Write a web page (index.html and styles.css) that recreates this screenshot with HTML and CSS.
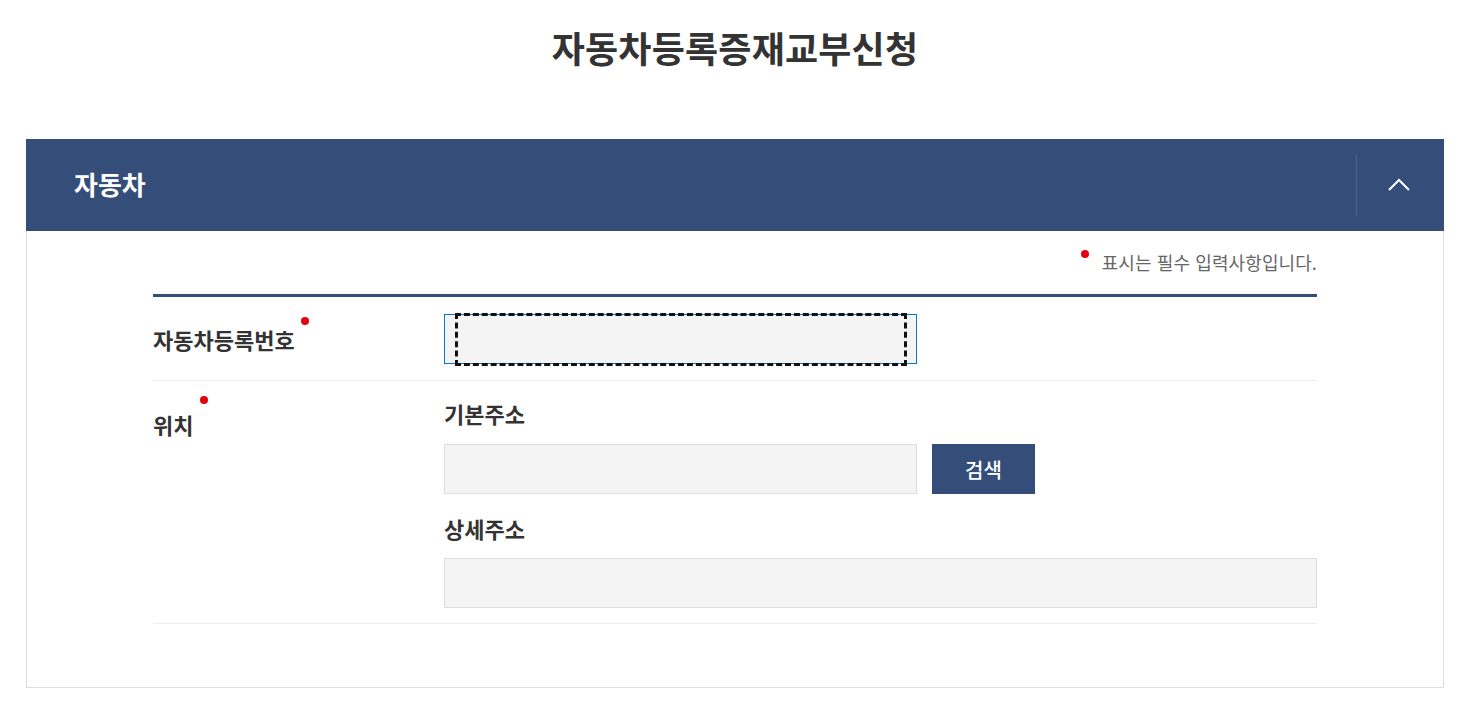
FILE: index.html
```html
<!DOCTYPE html>
<html lang="ko">

<head>
    <meta charset="UTF-8">
    <meta name="viewport" content="width=device-width, initial-scale=1.0">
    <title>자동차등록증재교부신청</title>
    <link rel="stylesheet" href="styles.css">
</head>

<body>
    <h1 class="page-title">자동차등록증재교부신청</h1>

    <section class="panel">
        <div class="panel-head">
            <h2>자동차</h2>
            <button class="toggle" type="button" aria-label="접기">
                <svg width="24" height="16" viewBox="0 0 24 16">
                    <polyline points="2,14 12,4 22,14" fill="none" stroke="#fff" stroke-width="2" />
                </svg>
            </button>
        </div>

        <div class="panel-body">
            <p class="note"><span class="dot"></span>표시는 필수 입력사항입니다.</p>

            <div class="form-table">
                <div class="form-row center">
                    <div class="label">자동차등록번호<span class="dot"></span></div>
                    <div class="field">
                        <div class="focus-wrap">
                            <input type="text" class="input focused">
                        </div>
                    </div>
                </div>

                <div class="form-row">
                    <div class="label label-top">위치<span class="dot"></span></div>
                    <div class="field">
                        <div class="sub-label">기본주소</div>
                        <div class="inline">
                            <input type="text" class="input">
                            <button type="button" class="btn">검색</button>
                        </div>
                        <div class="sub-label second">상세주소</div>
                        <input type="text" class="input wide">
                    </div>
                </div>
            </div>
        </div>
    </section>
</body>

</html>
```

FILE: styles.css
```css
body {
    margin: 0;
    padding-right: 12px;
    font-family: "Noto Sans CJK KR", "Noto Sans", sans-serif;
    color: #333;
    background-color: #fff;
}

.page-title {
    margin: 19px 0 0;
    text-align: center;
    font-size: 36px;
    line-height: 56px;
    font-weight: 700;
    letter-spacing: 0.2px;
    color: #333;
}

.panel {
    width: 1418px;
    margin: 64px auto 0;
    box-sizing: border-box;
}

.panel-head {
    height: 92px;
    background-color: #344e79;
    display: flex;
    align-items: center;
    justify-content: space-between;
    padding-left: 48px;
}

.panel-head h2 {
    margin: 0 0 4px;
    color: #fff;
    font-size: 26px;
    font-weight: 700;
}

.toggle {
    width: 88px;
    height: 61px;
    border: 0;
    border-left: 1px solid #4d6690;
    background: transparent;
    display: flex;
    align-items: center;
    justify-content: center;
    padding: 0 4px 2px 0;
    cursor: pointer;
}

.panel-body {
    border: 1px solid #ddd;
    border-top: 0;
    padding: 6px 126px 63px 126px;
}

.note {
    margin: 0;
    text-align: right;
    font-size: 18px;
    line-height: 50px;
    color: #666;
    letter-spacing: 0.1px;
}

.note .dot {
    margin-right: 13px;
    top: -12px;
}

.dot {
    display: inline-block;
    position: relative;
    width: 8px;
    height: 8px;
    border-radius: 50%;
    background-color: #e60012;
}

.form-table {
    border-top: 3px solid #344e79;
    margin-top: 7px;
}

.form-row {
    display: grid;
    grid-template-columns: 291px 1fr;
    border-bottom: 1px solid #eee;
}

.form-row.center {
    align-items: center;
    padding: 17px 0 16px;
}

.form-row:last-child {
    padding: 17px 0 15px;
}

.label {
    font-size: 22px;
    font-weight: 700;
    color: #333;
}

.label .dot {
    top: -24px;
    margin-left: 6px;
}

.label-top {
    padding-top: 10px;
}

.label-top .dot {
    top: -30px;
    margin-left: 7px;
}

.sub-label {
    font-size: 22px;
    font-weight: 700;
    line-height: 30px;
    margin-bottom: 16px;
}

.sub-label.second {
    margin-top: 19px;
    margin-bottom: 15px;
}

.inline {
    display: flex;
    gap: 15px;
}

.input {
    display: block;
    width: 473px;
    height: 50px;
    box-sizing: border-box;
    border: 1px solid #ddd;
    background-color: #f4f4f4;
    margin: 0;
    padding: 0 12px;
    font-family: inherit;
    font-size: 16px;
}

.input.wide {
    width: 100%;
}

.focus-wrap {
    position: relative;
    width: 473px;
}

.input.focused {
    border-color: #0a78c2;
    outline: none;
}

.focus-wrap::after {
    content: "";
    position: absolute;
    left: 11px;
    right: 10px;
    top: -1px;
    bottom: -2px;
    border: 3px dashed #111;
    pointer-events: none;
}

.btn {
    width: 103px;
    height: 50px;
    border: 0;
    background-color: #344e79;
    color: #fff;
    font-family: inherit;
    font-size: 20px;
    font-weight: 500;
    cursor: pointer;
}
```
